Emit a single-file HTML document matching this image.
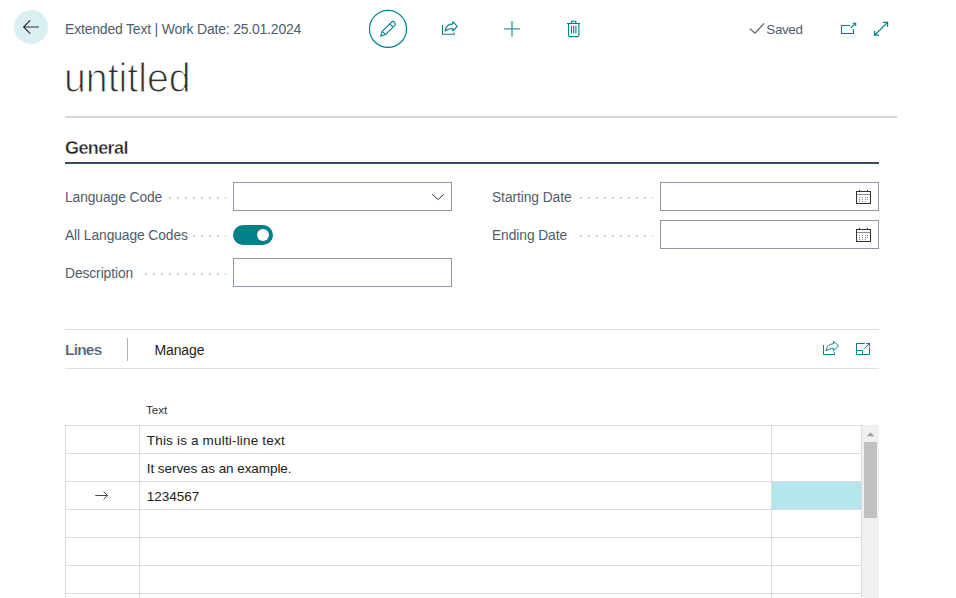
<!DOCTYPE html>
<html><head><meta charset="utf-8">
<style>
*{margin:0;padding:0;box-sizing:border-box}
html,body{width:956px;height:598px;overflow:hidden;background:#fff;font-family:"Liberation Sans",sans-serif;color:#212121}
.a{position:absolute;white-space:nowrap;line-height:1}
.back{left:14px;top:10px;width:34px;height:34px;border-radius:50%;background:#d9eff2}
.crumb{left:65px;top:22.2px;font-size:14px;letter-spacing:-0.2px;color:#505c6d}
.saved{left:766.3px;top:22.7px;font-size:13.4px;letter-spacing:-0.35px;color:#505c6d}
.title{left:64px;top:57.5px;font-size:41px;color:#303030;transform:scaleX(0.957);transform-origin:0 0;-webkit-text-stroke:1.1px #fff}
.hr1{left:65px;top:116px;width:832px;height:2px;background:#d4d7db}
.gen{left:65px;top:139px;font-size:18px;font-weight:bold;color:#212121;letter-spacing:-0.6px;-webkit-text-stroke:0.4px #fff}
.hr2{left:65px;top:162px;width:814px;height:2px;background:#3b4a5e}
.lbl{font-size:13.8px;letter-spacing:-0.08px;color:#505c6d}
.inp{border:1px solid #8d97a5;background:#fff}
.tgl{left:233px;top:225px;width:40px;height:20px;border-radius:10px;background:#00818a}
.tgl:after{content:"";position:absolute;left:23.9px;top:3.8px;width:12.4px;height:12.4px;border-radius:50%;background:#fff}
.hr3{left:65px;top:329px;width:814px;height:1px;background:#dadde1}
.hr4{left:65px;top:368px;width:814px;height:1px;background:#dadde1}
.lines{left:65px;top:342px;font-size:15.5px;font-weight:bold;color:#505c6d;letter-spacing:-0.8px;-webkit-text-stroke:0.2px #fff}
.sep{left:127px;top:338px;width:1px;height:23px;background:#a9b1ba}
.manage{left:154.4px;top:343.2px;font-size:14px;letter-spacing:-0.1px;color:#212121}
.th{left:146px;top:404px;font-size:11.6px;color:#333}
.grid{left:65px;top:425px;width:797px;height:200px;border-left:1px solid #d9dbe0}
.row{position:absolute;left:0;width:797px;height:28px;border-top:1px solid #d9dbe0}
.c1{position:absolute;left:73px;top:0;bottom:0;border-left:1px solid #d9dbe0}
.c2{position:absolute;left:705px;top:0;bottom:0;border-left:1px solid #d9dbe0}
.c3{position:absolute;left:795px;top:0;bottom:0;border-left:1px solid #d9dbe0}
.hl{position:absolute;left:706px;top:0;width:89px;bottom:0;background:#b3e7eb}
.txt{position:absolute;left:80.8px;font-size:13.5px;color:#212121;line-height:1;white-space:nowrap}
.sb{left:862px;top:425px;width:17px;height:173px;background:#f0f0f0}
.thumb{left:864px;top:442px;width:13px;height:76px;background:#c1c1c1}
svg.ov{position:absolute;left:0;top:0}
</style></head><body>
<div class="a back"></div>
<div class="a crumb">Extended Text | Work Date: 25.01.2024</div>
<div class="a saved">Saved</div>

<div class="a title">untitled</div>
<div class="a hr1"></div>
<div class="a gen">General</div>
<div class="a hr2"></div>

<div class="a lbl" style="left:65px;top:191.3px">Language Code</div>
<div class="a inp" style="left:233px;top:182px;width:219px;height:29px"></div>
<div class="a lbl" style="left:65px;top:229.3px">All Language Codes</div>
<div class="a tgl"></div>
<div class="a lbl" style="left:65px;top:267.3px">Description</div>
<div class="a inp" style="left:233px;top:258px;width:219px;height:29px"></div>

<div class="a lbl" style="left:492px;top:191.3px">Starting Date</div>
<div class="a inp" style="left:660px;top:182px;width:219px;height:29px"></div>
<div class="a lbl" style="left:492px;top:229.3px">Ending Date</div>
<div class="a inp" style="left:660px;top:220px;width:219px;height:29px"></div>

<div class="a hr3"></div>
<div class="a lines">Lines</div>
<div class="a sep"></div>
<div class="a manage">Manage</div>
<div class="a hr4"></div>

<div class="a th">Text</div>
<div class="a grid">
  <div class="row" style="top:0"><div class="c1"></div><div class="c2"></div><div class="c3"></div><div class="txt" style="top:7.6px;letter-spacing:0.18px">This is a multi-line text</div></div>
  <div class="row" style="top:28px"><div class="c1"></div><div class="c2"></div><div class="c3"></div><div class="txt" style="top:7.6px;letter-spacing:-0.07px">It serves as an example.</div></div>
  <div class="row" style="top:56px"><div class="hl"></div><div class="c1"></div><div class="c2"></div><div class="c3"></div><div class="txt" style="top:7.6px">1234567</div></div>
  <div class="row" style="top:84px"><div class="c1"></div><div class="c2"></div><div class="c3"></div></div>
  <div class="row" style="top:112px"><div class="c1"></div><div class="c2"></div><div class="c3"></div></div>
  <div class="row" style="top:140px"><div class="c1"></div><div class="c2"></div><div class="c3"></div></div>
  <div class="row" style="top:168px"><div class="c1"></div><div class="c2"></div><div class="c3"></div></div>
</div>
<div class="a sb"></div>
<div class="a thumb"></div>

<svg class="ov" width="956" height="598" viewBox="0 0 956 598">
  <!-- back arrow -->
  <path d="M39 27H23.8M30.2 20.4L23.6 27l6.6 6.6" fill="none" stroke="#333" stroke-width="1.2"/>
  <!-- edit circle -->
  <circle cx="388" cy="28.9" r="18.5" fill="none" stroke="#00818a" stroke-width="1.2"/>
  <g transform="translate(380.6,36.2) rotate(-45)" fill="none" stroke="#00818a" stroke-width="1.1" stroke-linejoin="round">
    <path d="M0 0L4.6 -2.3H17.4A2.3 2.3 0 0 1 17.4 2.3H4.6Z"/>
    <path d="M4.6 -2.3V2.3M15.2 -2.3V2.3"/>
  </g>
  <!-- share -->
  <g fill="none" stroke="#00818a" stroke-width="1.1">
    <path d="M442.5 25V34.3H454.1V32.4"/>
    <path d="M445.2 31C445.8 26.5 449 23.9 452.8 23.9V21.6L457.2 26.3L452.8 31V28.6C449.5 28.4 447 29.5 445.2 31Z" stroke-linejoin="round"/>
  </g>
  <!-- plus -->
  <path d="M504 28.8H520.2M512 21V36.7" stroke="#00818a" stroke-width="1.3" fill="none" opacity="0.8"/>
  <!-- trash -->
  <g fill="none" stroke="#00818a" stroke-width="1.1">
    <path d="M567 23.5H580M571.6 23.5V21.2H575.8V23.5"/>
    <path d="M568.5 23.5V35A1.6 1.6 0 0 0 570.1 36.6H577.3A1.6 1.6 0 0 0 578.9 35V23.5"/>
    <path d="M571.5 25.8V33.4M573.7 25.8V33.4M575.9 25.8V33.4"/>
  </g>
  <!-- saved check -->
  <path d="M749.8 28.6L755 33.2L764 23.4" fill="none" stroke="#505c6d" stroke-width="1.1"/>
  <!-- open in new -->
  <g fill="none" stroke="#00818a" stroke-width="1.1">
    <path d="M850.2 25.5H841.5V33.5H853.5V28.9"/>
    <path d="M850.8 28L855.6 23.2M852.6 23.3H855.7V26.2"/>
  </g>
  <!-- expand -->
  <g fill="none" stroke="#00818a" stroke-width="1.2">
    <path d="M874.8 35L887.6 22.4M874.6 30.8V35.1H879M883 22.4H887.6V26.8"/>
  </g>
  <!-- dropdown chevron -->
  <path d="M432.2 194.2L438.1 199.6L443.8 194.2" fill="none" stroke="#333" stroke-width="1"/>
  <!-- calendars -->
  <g fill="none" stroke="#333" stroke-width="1" shape-rendering="crispEdges">
    <path d="M856.5 191.5H870.5V203.5H856.5Z"/>
    <path d="M859.5 190V192M867.5 190V192"/>
  </g>
  <path d="M857 194.5H870" stroke="#8a8a8a" stroke-width="1" shape-rendering="crispEdges"/>
  <g fill="#8a8a8a" shape-rendering="crispEdges"><rect x="859" y="197" width="1.2" height="1"/><rect x="862" y="197" width="1.2" height="1"/><rect x="864.5" y="197" width="1.2" height="1"/><rect x="867" y="197" width="1.2" height="1"/><rect x="859" y="199" width="1.2" height="1"/><rect x="862" y="199" width="1.2" height="1"/><rect x="864.5" y="199" width="1.2" height="1"/><rect x="867" y="199" width="1.2" height="1"/><rect x="859" y="201" width="1.2" height="1"/><rect x="862" y="201" width="1.2" height="1"/><rect x="864.5" y="201" width="1.2" height="1"/></g>
  <g fill="none" stroke="#333" stroke-width="1" shape-rendering="crispEdges">
    <path d="M856.5 229.5H870.5V241.5H856.5Z"/>
    <path d="M859.5 228V230M867.5 228V230"/>
  </g>
  <path d="M857 232.5H870" stroke="#8a8a8a" stroke-width="1" shape-rendering="crispEdges"/>
  <g fill="#8a8a8a" shape-rendering="crispEdges"><rect x="859" y="235" width="1.2" height="1"/><rect x="862" y="235" width="1.2" height="1"/><rect x="864.5" y="235" width="1.2" height="1"/><rect x="867" y="235" width="1.2" height="1"/><rect x="859" y="237" width="1.2" height="1"/><rect x="862" y="237" width="1.2" height="1"/><rect x="864.5" y="237" width="1.2" height="1"/><rect x="867" y="237" width="1.2" height="1"/><rect x="859" y="239" width="1.2" height="1"/><rect x="862" y="239" width="1.2" height="1"/><rect x="864.5" y="239" width="1.2" height="1"/></g>
  <!-- leader dots -->
  <g fill="#cdd0d6" shape-rendering="crispEdges">
    <rect x="169" y="197" width="2" height="2"/><rect x="177" y="197" width="2" height="2"/><rect x="185" y="197" width="2" height="2"/><rect x="193" y="197" width="2" height="2"/><rect x="201" y="197" width="2" height="2"/><rect x="209" y="197" width="2" height="2"/><rect x="217" y="197" width="2" height="2"/><rect x="225" y="197" width="1" height="2"/>
    <rect x="193" y="235" width="2" height="2"/><rect x="201" y="235" width="2" height="2"/><rect x="209" y="235" width="2" height="2"/><rect x="217" y="235" width="2" height="2"/><rect x="225" y="235" width="1" height="2"/>
    <rect x="145" y="273" width="2" height="2"/><rect x="153" y="273" width="2" height="2"/><rect x="161" y="273" width="2" height="2"/><rect x="169" y="273" width="2" height="2"/><rect x="177" y="273" width="2" height="2"/><rect x="185" y="273" width="2" height="2"/><rect x="193" y="273" width="2" height="2"/><rect x="201" y="273" width="2" height="2"/><rect x="209" y="273" width="2" height="2"/><rect x="217" y="273" width="2" height="2"/><rect x="225" y="273" width="1" height="2"/>
    <rect x="580" y="197" width="2" height="2"/><rect x="588" y="197" width="2" height="2"/><rect x="596" y="197" width="2" height="2"/><rect x="604" y="197" width="2" height="2"/><rect x="612" y="197" width="2" height="2"/><rect x="620" y="197" width="2" height="2"/><rect x="628" y="197" width="2" height="2"/><rect x="636" y="197" width="2" height="2"/><rect x="644" y="197" width="2" height="2"/><rect x="652" y="197" width="1" height="2"/>
    <rect x="580" y="235" width="2" height="2"/><rect x="588" y="235" width="2" height="2"/><rect x="596" y="235" width="2" height="2"/><rect x="604" y="235" width="2" height="2"/><rect x="612" y="235" width="2" height="2"/><rect x="620" y="235" width="2" height="2"/><rect x="628" y="235" width="2" height="2"/><rect x="636" y="235" width="2" height="2"/><rect x="644" y="235" width="2" height="2"/><rect x="652" y="235" width="1" height="2"/>
  </g>
  <!-- lines action icons -->
  <g fill="none" stroke="#00818a" stroke-width="1">
    <path d="M823.5 345V354.5H834.5V352.3"/>
    <path d="M826 351C826.5 346.5 829.5 343.8 833.6 343.8V341.3L838.6 346L833.6 350.8V348.5C830.5 348.4 828 349.3 826 351Z" stroke-linejoin="round"/>
    <path d="M864.8 343.5H856.5V354.5H869.5V347.6"/>
    <path d="M856.5 350.5H862.5V354.5"/>
    <path d="M864.3 348.6L869 343.9"/>
    <path d="M866.3 343.5H869.5V346.7" stroke-width="1.2"/>
  </g>
  <!-- row arrow -->
  <path d="M95.3 495.5H107.5M103.6 491.6L107.5 495.5L103.6 499.4" fill="none" stroke="#333" stroke-width="0.9"/>
  <!-- scrollbar up arrow -->
  <path d="M866.8 436.2L870.5 432.2L874.2 436.2Z" fill="#a0a0a0"/>
</svg>
</body></html>
